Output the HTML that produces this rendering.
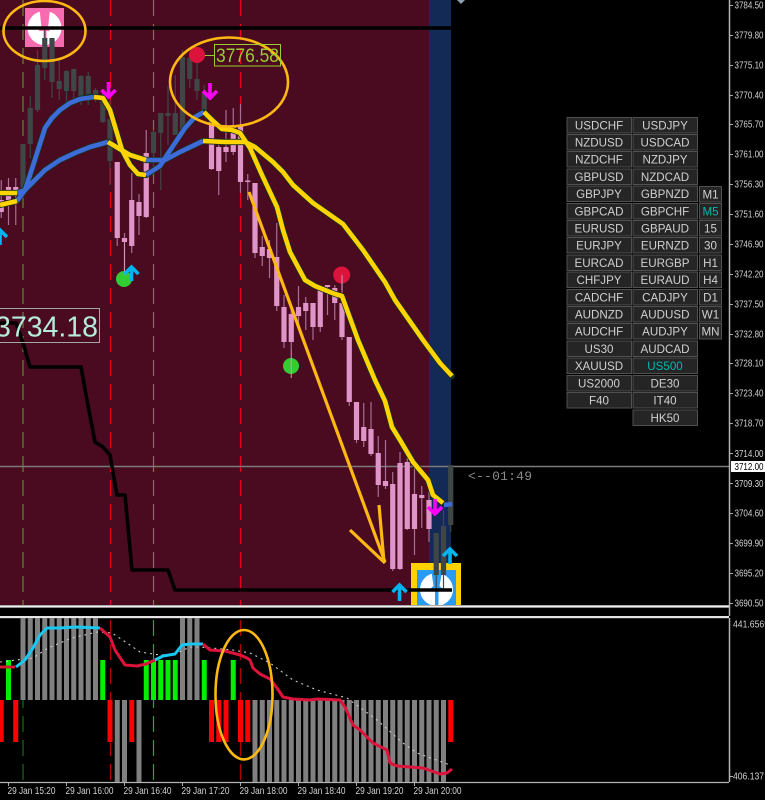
<!DOCTYPE html>
<html><head><meta charset="utf-8"><style>
html,body{margin:0;padding:0;background:#000;width:765px;height:800px;overflow:hidden}
svg{display:block}
text{font-family:"Liberation Sans",sans-serif}
.p text{font-size:10.2px;fill:#d2d2d2}
.t text{font-size:10.2px;fill:#d2d2d2}
.b rect{fill:#252525;stroke:#505050;stroke-width:1}
.b text{font-size:11.6px;fill:#d0d0d0;text-anchor:middle}
</style></head><body>
<svg width="765" height="800" viewBox="0 0 765 800" xmlns="http://www.w3.org/2000/svg">
<rect width="765" height="800" fill="#000"/>
<rect x="0" y="0" width="429" height="605" fill="#4a0a20"/>
<rect x="429" y="0" width="22" height="605" fill="#122a55"/>
<polygon points="457,0 465,0 461,4" fill="#8fa0b0"/>
<g stroke-width="1.2" fill="none" stroke-dasharray="16 8">
<path d="M23 0V605M153.5 0V605" stroke="#5f8a30"/>
<path d="M110.5 0V605M240.5 0V605" stroke="#e8001c"/>
<path d="M23 620V782" stroke="#1c6a1c"/>
<path d="M153.5 620V782" stroke="#3f9a3f"/>
<path d="M110.5 620V782M240.5 620V782" stroke="#b00000"/>
</g>
<path d="M0 466.5H729" stroke="#7a7a7a" stroke-width="1.4"/>
<!-- pink icon -->
<rect x="25" y="8" width="39" height="39" fill="#f76bb0"/>
<circle cx="44.5" cy="28" r="17" fill="#fff"/>
<path d="M39.5 9H50L48 28L50 31H46.5V46H43.5V31H38.5L41.5 28Z" fill="#f76bb0"/>
<!-- blue icon -->
<rect x="411" y="563" width="50" height="42" fill="#ffd200"/>
<rect x="417" y="570" width="39" height="35" fill="#2a9bf5"/>
<circle cx="436.5" cy="589.5" r="16.5" fill="#fff"/>
<path d="M431.5 572H442L439.5 586L444 590H438.5V605H435V590H429L433.5 586Z" fill="#2a9bf5"/>
<!-- wicks -->
<path fill="none" stroke="#a56f96" stroke-width="1.2" d="M1.25 180V218M8.5 178V225M15.75 178V225M117.25 162V246M124.5 233V270M131.75 173V253M139 194V235M146.25 130V218M211.5 115V170M218.75 140V195M226 110V162M233.25 108V155M240.5 104V193M247.75 174V200M255 183V258M262.25 236V266M269.5 240V278M276.75 223V311M284 295V348M291.25 310V350M298.5 286V330M305.75 297V330M313 303V340M320.25 290V332M327.5 285V315M334.75 285V320M342 275V340M349.25 337V406M356.5 402V443M363.75 403V447M371 402V456M378.25 436V497M385.5 440V489M392.75 472V571M400 452V570M407.25 458V530M414.5 467V555M421.75 486V528M429 491V542"/>
<path fill="none" stroke="#3f4646" stroke-width="1.2" d="M23 144V190M30.25 96V158M37.5 50V112M44.75 28V80M52 38V98M59.25 60V100M66.5 70V105M73.75 69V105M81 75V105M88.25 72V105M95.5 88V102M102.75 90V123M110 100V185M153.5 130V170M160.75 113V190M168 86V145M175.25 75V135M182.5 50V135M189.75 55V88M197 55V100M204.25 85V115M436.25 533V590M443.5 510V590M450.75 465V532"/>
<!-- bodies -->
<path fill="none" stroke="#e095c8" stroke-width="5.2" d="M1.25 200V212M8.5 187V200M15.75 187V195M117.25 162V238M124.5 238V242M131.75 200V246M139 202V216M146.25 153V217M211.5 117V169M218.75 147V171M226 147V152M233.25 125V152M240.5 125V182M247.75 180.5V182M255 183V253M262.25 247V256M269.5 249V258M276.75 257V306M284 307V342M291.25 314V342M298.5 307V316M305.75 303V311M313 303V327M320.25 290V327M327.5 285V287M334.75 288V303M342 303V337M349.25 337V402M356.5 402V440M363.75 427V441M371 429V454M378.25 453V485M385.5 481V486M392.75 484V569M400 463V569M407.25 462V529M414.5 494V529M421.75 495V498M429 500V529"/>
<path fill="none" stroke="#3f4646" stroke-width="5.2" d="M23 144V190M30.25 108V144M37.5 65V110M44.75 38V68M52 38V82M59.25 81V89M66.5 71V91M73.75 69V91M81 76V100M88.25 76V96M95.5 90V100M102.75 97V122M110 119V161M153.5 132V153M160.75 113V133M168 113V116M175.25 113V135M182.5 57V133M189.75 58V79M197 79V91M204.25 93V110M436.25 533V575M443.5 526V575M450.75 465V525"/>
<!-- black lines -->
<path d="M0 28H451" stroke="#000" stroke-width="3.6"/>
<polyline fill="none" stroke="#000" stroke-width="3.6" stroke-linejoin="round" points="0,323 16,323 23,343 30,367 81,367 87,400 95,442 103,447 110,455 117,495 125,495 132,570 168,570 175,590 452,590"/>
<!-- MA shadows -->
<g fill="none" stroke="#17321e" stroke-width="6.2" stroke-linejoin="round" stroke-linecap="round">
<polyline points="0,205 17,201 25,190 30,175 38,150 45,128 52,118 60,110 70,103 80,99 88,97 95,97 103,98 110,110 116,130 122,150 130,165 138,174 146,175 160,166 167,155 175,143 185,128 195,117 204,112 212,120 222,129 232,130 240,133 250,148 262,175 277,207 283,230 290,252 305,280 315,286 335,294 342,296 350,318 358,340 375,380 385,401 392,427 400,440 413,462 428,480 433,495 443,503"/>
<polyline points="0,193 17,193 25,190 35,180 45,170 60,160 75,153 90,147 108,142 118,148 130,155 146,160 165,160 180,152 203,141 225,142 245,142 255,147 273,162 283,172 293,185 313,203 343,224 363,250 385,282 395,300 423,340 440,363 452,376"/>
</g>
<!-- MA slow -->
<g fill="none" stroke-width="4.6" stroke-linejoin="round">
<polyline stroke="#3d6bd8" points="17,193 25,190 35,180 45,170 60,160 75,153 90,147 108,142"/>
<polyline stroke="#3d6bd8" points="146,160 165,160 180,152 203,141"/>
<polyline stroke="#ffd400" points="0,193 17,193"/>
<polyline stroke="#ffd400" points="108,142 118,148 130,155 146,160"/>
<polyline stroke="#ffd400" points="203,141 225,142 245,142 255,147 273,162 283,172 293,185 313,203 343,224 363,250 385,282 395,300 423,340 440,363 452,376"/>
<!-- MA fast -->
<polyline stroke="#3d6bd8" points="17,201 25,190 30,175 38,150 45,128 52,118 60,110 70,103 80,99 94,97"/>
<polyline stroke="#3d6bd8" points="146,175 160,166 167,155 175,143 185,128 195,117 204,112"/>
<polyline stroke="#ffd400" points="0,205 17,201"/>
<polyline stroke="#ffd400" points="94,97 103,98 110,110 116,130 122,150 130,165 138,174 146,175"/>
<polyline stroke="#ffd400" points="204,112 212,120 222,129 232,130 240,133 250,148 262,175 277,207 283,230 290,252 305,280 315,286 335,294 342,296 350,318 358,340 375,380 385,401 392,427 400,440 413,462 428,480 433,495 443,503"/>
<polyline stroke="#3d6bd8" points="444,505 452,504"/>
</g>
<!-- gold arrow -->
<path fill="none" stroke="#fdb813" stroke-width="3.2" d="M249 192L385 562M350 530L385 563M379 505L384 562"/>
<!-- circles -->
<circle cx="197" cy="55" r="8" fill="#dc143c"/>
<circle cx="341.7" cy="275" r="8.5" fill="#dc143c"/>
<circle cx="124" cy="279" r="8" fill="#32cd32"/>
<circle cx="291" cy="366" r="8" fill="#32cd32"/>
<path d="M124.5 242V275M342 275V290M291.25 350V378" stroke="#c99bbd" stroke-width="1"/>
<!-- arrows -->
<g fill="none" stroke="#00b4f0" stroke-width="3.6">
<path d="M0 245V230M-7 237L0 230L7 237"/>
<path d="M131.5 281V267M124.5 274L131.5 267L138.5 274"/>
<path d="M399.5 601V585M392.5 592L399.5 585L406.5 592"/>
<path d="M450 564V549M443 556L450 549L457 556"/>
</g>
<g fill="none" stroke="#ff00ff" stroke-width="3.6">
<path d="M108.5 82V97M101.5 90L108.5 97L115.5 90"/>
<path d="M210 83V98M203 91L210 98L217 91"/>
<path d="M435 499V514M428 507L435 514L442 507"/>
</g>
<!-- ellipses -->
<g fill="none" stroke="#fdb813" stroke-width="2.6">
<ellipse cx="44.5" cy="31" rx="41" ry="30"/>
<ellipse cx="229" cy="82" rx="59" ry="44.5"/>
</g>
<!-- labels -->
<path d="M205 55.5H214" stroke="#9acd32"/>
<rect x="214.5" y="44.5" width="66" height="21.5" fill="none" stroke="#9acd32"/>
<text x="216" y="62" font-size="19" fill="#9acd32" textLength="63" lengthAdjust="spacingAndGlyphs">3776.58</text>
<rect x="-2" y="308.5" width="101.5" height="34" fill="none" stroke="#a0a8a8"/>
<text x="-5" y="336.5" font-size="29" fill="#b4ecdc" textLength="103" lengthAdjust="spacingAndGlyphs">3734.18</text>
<text x="468" y="480" style="font-family:'Liberation Mono',monospace" font-size="13" fill="#8a8a8a" textLength="64">&lt;--01:49</text>
<!-- separators -->
<rect x="0" y="605" width="729" height="1" fill="#aaa"/><rect x="0" y="606" width="729" height="1.6" fill="#f0f0f0"/>
<rect x="0" y="616" width="729" height="2.2" fill="#e4e4e4"/>
<path d="M729.5 0V607M729.5 607V616" stroke="#b4b4b4" stroke-width="1.5"/>
<path d="M729.5 618V782" stroke="#b4b4b4" stroke-width="1.5"/>
<path d="M0 782.5H729" stroke="#b4b4b4" stroke-width="1.2"/>
<!-- histogram -->
<g fill="none" stroke-width="5">
<path stroke="#ff0000" d="M1.25 700V742M15.75 700V742M110 700V742M131.75 700V742M211.5 700V742M218.75 700V742M226 700V742M240.5 700V742M247.75 700V742M450.75 700V742"/>
<path stroke="#00f000" d="M8.5 660V700M102.75 660V700M146.25 660V700M153.5 660V700M160.75 660V700M168 660V700M175.25 660V700M204.25 660V700M233.25 660V700"/>
<path stroke="#808080" d="M23 618V700M30.25 618V700M37.5 618V700M44.75 618V700M52 618V700M59.25 618V700M66.5 618V700M73.75 618V700M81 618V700M88.25 618V700M95.5 618V700M182.5 618V700M189.75 618V700M197 618V700"/>
<path stroke="#808080" d="M117.25 700V782M124.5 700V782M139 700V782M255 700V782M262.25 700V782M269.5 700V782M276.75 700V782M284 700V782M291.25 700V782M298.5 700V782M305.75 700V782M313 700V782M320.25 700V782M327.5 700V782M334.75 700V782M342 700V782M349.25 700V782M356.5 700V782M363.75 700V782M371 700V782M378.25 700V782M385.5 700V782M392.75 700V782M400 700V782M407.25 700V782M414.5 700V782M421.75 700V782M429 700V782M436.25 700V782M443.5 700V782"/>
</g>
<polyline fill="none" stroke="#ccc" stroke-width="1.1" stroke-dasharray="2 4" points="0,662 33,658 48,648 72,638 97,632 112,633 127,643 140,652 160,655 175,654 190,647 200,647 233,650 250,653 270,663 293,680 317,690 347,698 377,720 403,743 417,753 450,765"/>
<g fill="none" stroke-width="3" stroke-linejoin="round">
<polyline stroke="#dc143c" points="0,667 15,667"/>
<polyline stroke="#18c8f0" points="16,667 25,660 33,648 40,635 47,628 60,628 75,627 100,628" />
<polyline stroke="#dc143c" points="100,628 110,637 115,650 125,665 137,666 146,664 155,660"/>
<polyline stroke="#18c8f0" points="155,660 163,656 175,654 182,645 190,644 203,644"/>
<polyline stroke="#dc143c" points="203,644 210,650 225,651 240,655 247,658 250,660 253,668 260,674 270,679 277,688 283,697 293,699 310,700 317,699 340,700 345,707 353,725 360,730 373,743 387,750 390,763 397,766 423,768 440,774 447,773 452,769"/>
</g>
<ellipse cx="244" cy="694.7" rx="28.5" ry="64.7" fill="none" stroke="#fdb813" stroke-width="2.6"/>
<!-- price axis -->
<g class="p">
<path stroke="#aaa" d="M730 5.5H733M730 35.5H733M730 65.5H733M730 95.5H733M730 124.5H733M730 154.5H733M730 184.5H733M730 214.5H733M730 244.5H733M730 274.5H733M730 304.5H733M730 334.5H733M730 363.5H733M730 393.5H733M730 423.5H733M730 453.5H733M730 483.5H733M730 513.5H733M730 543.5H733M730 573.5H733M730 603.5H733M730 776.5H733"/>
<text x="734.5" y="8.5" textLength="29" lengthAdjust="spacingAndGlyphs">3784.50</text>
<text x="734.5" y="38.5" textLength="29" lengthAdjust="spacingAndGlyphs">3779.80</text>
<text x="734.5" y="68.5" textLength="29" lengthAdjust="spacingAndGlyphs">3775.10</text>
<text x="734.5" y="98.5" textLength="29" lengthAdjust="spacingAndGlyphs">3770.40</text>
<text x="734.5" y="127.5" textLength="29" lengthAdjust="spacingAndGlyphs">3765.70</text>
<text x="734.5" y="157.5" textLength="29" lengthAdjust="spacingAndGlyphs">3761.00</text>
<text x="734.5" y="187.5" textLength="29" lengthAdjust="spacingAndGlyphs">3756.30</text>
<text x="734.5" y="217.5" textLength="29" lengthAdjust="spacingAndGlyphs">3751.60</text>
<text x="734.5" y="247.5" textLength="29" lengthAdjust="spacingAndGlyphs">3746.90</text>
<text x="734.5" y="277.5" textLength="29" lengthAdjust="spacingAndGlyphs">3742.20</text>
<text x="734.5" y="307.5" textLength="29" lengthAdjust="spacingAndGlyphs">3737.50</text>
<text x="734.5" y="337.5" textLength="29" lengthAdjust="spacingAndGlyphs">3732.80</text>
<text x="734.5" y="366.5" textLength="29" lengthAdjust="spacingAndGlyphs">3728.10</text>
<text x="734.5" y="396.5" textLength="29" lengthAdjust="spacingAndGlyphs">3723.40</text>
<text x="734.5" y="426.5" textLength="29" lengthAdjust="spacingAndGlyphs">3718.70</text>
<text x="734.5" y="457" textLength="29" lengthAdjust="spacingAndGlyphs">3714.00</text>
<text x="734.5" y="487" textLength="29" lengthAdjust="spacingAndGlyphs">3709.30</text>
<text x="734.5" y="516.5" textLength="29" lengthAdjust="spacingAndGlyphs">3704.60</text>
<text x="734.5" y="546.5" textLength="29" lengthAdjust="spacingAndGlyphs">3699.90</text>
<text x="734.5" y="576.5" textLength="29" lengthAdjust="spacingAndGlyphs">3695.20</text>
<text x="734.5" y="606.5" textLength="29" lengthAdjust="spacingAndGlyphs">3690.50</text>
<rect x="731" y="461" width="34" height="11" fill="#fff"/>
<text x="734.5" y="470" textLength="29" lengthAdjust="spacingAndGlyphs" style="fill:#000">3712.00</text>
<text x="733" y="627.5" textLength="36" lengthAdjust="spacingAndGlyphs">441.6569</text>
<text x="733" y="779.5" textLength="31" lengthAdjust="spacingAndGlyphs">406.137</text>
</g>
<!-- time axis -->
<g class="t">
<path stroke="#aaa" d="M8.5 783V786M66.5 783V786M124.5 783V786M182.5 783V786M240.5 783V786M298.5 783V786M356.5 783V786M414.5 783V786"/>
<text x="7.5" y="794" textLength="48" lengthAdjust="spacingAndGlyphs">29 Jan 15:20</text>
<text x="65.5" y="794" textLength="48" lengthAdjust="spacingAndGlyphs">29 Jan 16:00</text>
<text x="123.5" y="794" textLength="48" lengthAdjust="spacingAndGlyphs">29 Jan 16:40</text>
<text x="181.5" y="794" textLength="48" lengthAdjust="spacingAndGlyphs">29 Jan 17:20</text>
<text x="239.5" y="794" textLength="48" lengthAdjust="spacingAndGlyphs">29 Jan 18:00</text>
<text x="297.5" y="794" textLength="48" lengthAdjust="spacingAndGlyphs">29 Jan 18:40</text>
<text x="355.5" y="794" textLength="48" lengthAdjust="spacingAndGlyphs">29 Jan 19:20</text>
<text x="413.5" y="794" textLength="48" lengthAdjust="spacingAndGlyphs">29 Jan 20:00</text>
</g>
<!-- buttons -->
<g class="b">
<rect x="567" y="117.5" width="64.5" height="15.5"/><text x="599" y="129.5">USDCHF</text>
<rect x="567" y="134.5" width="64.5" height="15.5"/><text x="599" y="146.5">NZDUSD</text>
<rect x="567" y="151.5" width="64.5" height="15.5"/><text x="599" y="163.5">NZDCHF</text>
<rect x="567" y="169" width="64.5" height="15.5"/><text x="599" y="181">GBPUSD</text>
<rect x="567" y="186" width="64.5" height="15.5"/><text x="599" y="198">GBPJPY</text>
<rect x="567" y="203.5" width="64.5" height="15.5"/><text x="599" y="215.5">GBPCAD</text>
<rect x="567" y="220.5" width="64.5" height="15.5"/><text x="599" y="232.5">EURUSD</text>
<rect x="567" y="237.5" width="64.5" height="15.5"/><text x="599" y="249.5">EURJPY</text>
<rect x="567" y="255" width="64.5" height="15.5"/><text x="599" y="267">EURCAD</text>
<rect x="567" y="272" width="64.5" height="15.5"/><text x="599" y="284">CHFJPY</text>
<rect x="567" y="289.5" width="64.5" height="15.5"/><text x="599" y="301.5">CADCHF</text>
<rect x="567" y="306.5" width="64.5" height="15.5"/><text x="599" y="318.5">AUDNZD</text>
<rect x="567" y="323.5" width="64.5" height="15.5"/><text x="599" y="335.5">AUDCHF</text>
<rect x="567" y="341" width="64.5" height="15.5"/><text x="599" y="353">US30</text>
<rect x="567" y="358" width="64.5" height="15.5"/><text x="599" y="370">XAUUSD</text>
<rect x="567" y="375.5" width="64.5" height="15.5"/><text x="599" y="387.5">US2000</text>
<rect x="567" y="392.5" width="64.5" height="15.5"/><text x="599" y="404.5">F40</text>
<rect x="633" y="117.5" width="64.5" height="15.5"/><text x="665" y="129.5">USDJPY</text>
<rect x="633" y="134.5" width="64.5" height="15.5"/><text x="665" y="146.5">USDCAD</text>
<rect x="633" y="151.5" width="64.5" height="15.5"/><text x="665" y="163.5">NZDJPY</text>
<rect x="633" y="169" width="64.5" height="15.5"/><text x="665" y="181">NZDCAD</text>
<rect x="633" y="186" width="64.5" height="15.5"/><text x="665" y="198">GBPNZD</text>
<rect x="633" y="203.5" width="64.5" height="15.5"/><text x="665" y="215.5">GBPCHF</text>
<rect x="633" y="220.5" width="64.5" height="15.5"/><text x="665" y="232.5">GBPAUD</text>
<rect x="633" y="237.5" width="64.5" height="15.5"/><text x="665" y="249.5">EURNZD</text>
<rect x="633" y="255" width="64.5" height="15.5"/><text x="665" y="267">EURGBP</text>
<rect x="633" y="272" width="64.5" height="15.5"/><text x="665" y="284">EURAUD</text>
<rect x="633" y="289.5" width="64.5" height="15.5"/><text x="665" y="301.5">CADJPY</text>
<rect x="633" y="306.5" width="64.5" height="15.5"/><text x="665" y="318.5">AUDUSD</text>
<rect x="633" y="323.5" width="64.5" height="15.5"/><text x="665" y="335.5">AUDJPY</text>
<rect x="633" y="341" width="64.5" height="15.5"/><text x="665" y="353">AUDCAD</text>
<rect x="633" y="358" width="64.5" height="15.5"/><text x="665" y="370" style="fill:#00b8b0">US500</text>
<rect x="633" y="375.5" width="64.5" height="15.5"/><text x="665" y="387.5">DE30</text>
<rect x="633" y="392.5" width="64.5" height="15.5"/><text x="665" y="404.5">IT40</text>
<rect x="633" y="410" width="64.5" height="15.5"/><text x="665" y="422">HK50</text>
<rect x="699.5" y="186.5" width="22" height="15.5"/><text x="710.5" y="198.5">M1</text>
<rect x="699.5" y="203.5" width="22" height="15.5"/><text x="710.5" y="215.5" style="fill:#00b8b0">M5</text>
<rect x="699.5" y="220.5" width="22" height="15.5"/><text x="710.5" y="232.5">15</text>
<rect x="699.5" y="237.5" width="22" height="15.5"/><text x="710.5" y="249.5">30</text>
<rect x="699.5" y="255" width="22" height="15.5"/><text x="710.5" y="267">H1</text>
<rect x="699.5" y="272" width="22" height="15.5"/><text x="710.5" y="284">H4</text>
<rect x="699.5" y="289.5" width="22" height="15.5"/><text x="710.5" y="301.5">D1</text>
<rect x="699.5" y="306.5" width="22" height="15.5"/><text x="710.5" y="318.5">W1</text>
<rect x="699.5" y="323.5" width="22" height="15.5"/><text x="710.5" y="335.5">MN</text>
</g>
</svg>
</body></html>
